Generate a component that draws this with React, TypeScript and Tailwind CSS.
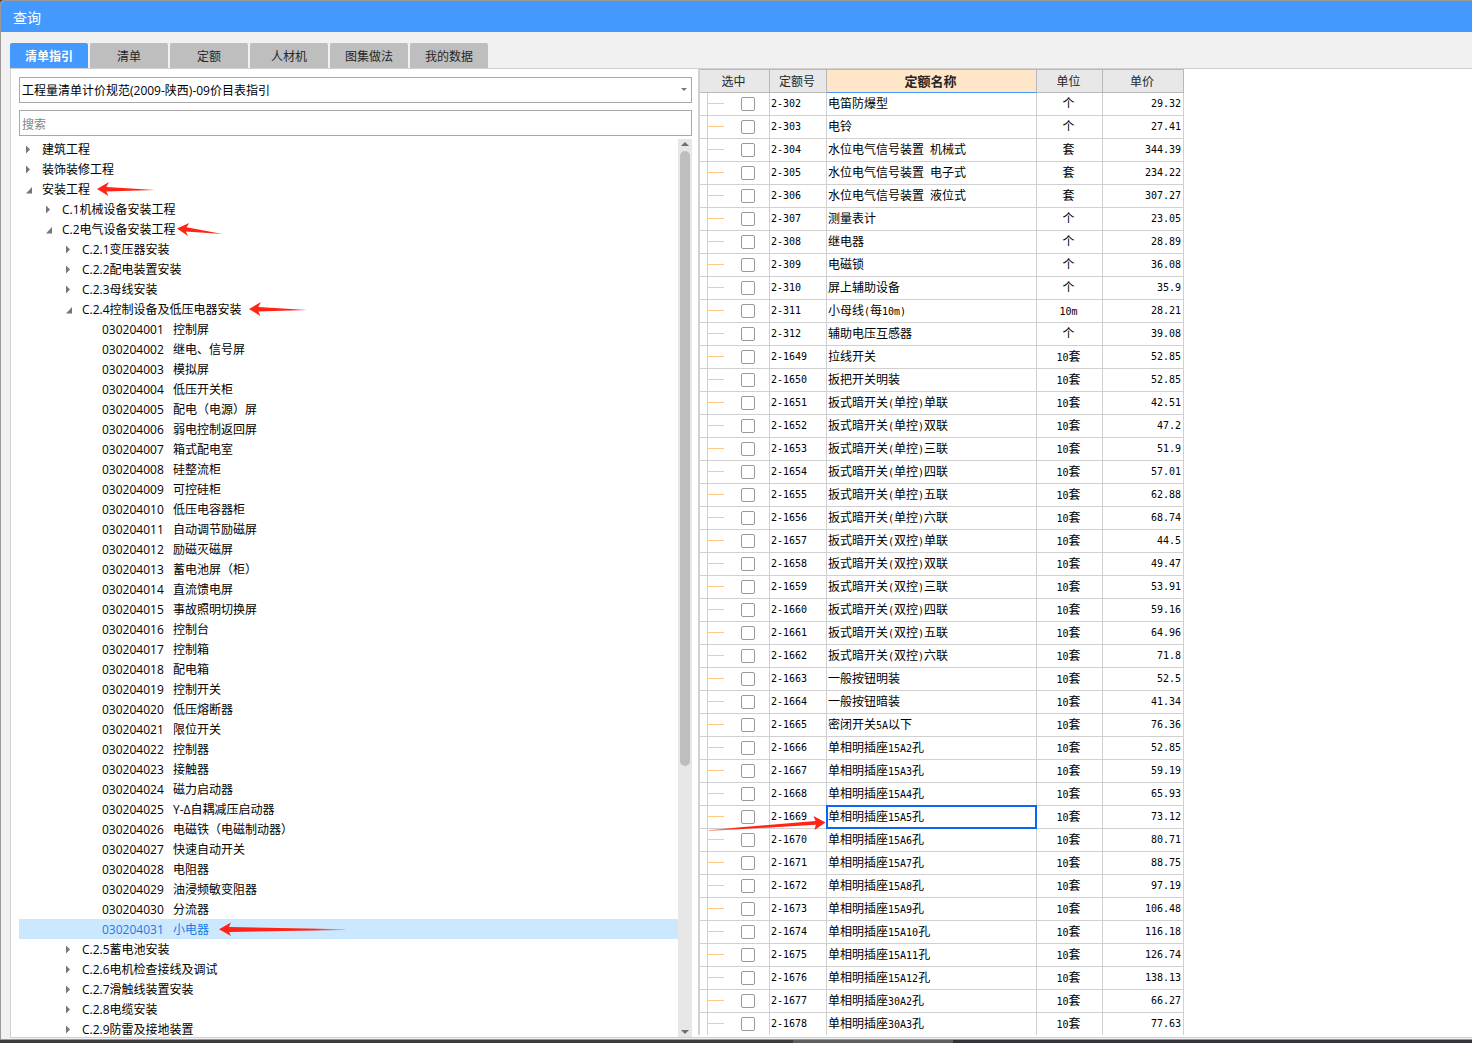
import { useState } from "react";
import clsx from "clsx";

type TreeItem = {
  level: number;
  label: string;
  code?: string;
  open?: boolean;
  mark?: "short" | "tilted" | "long";
};

type Quota = [code: string, name: string, unit: string, price: string];

const TABS = ["清单指引", "清单", "定额", "人材机", "图集做法", "我的数据"];

const LEAVES = [
  "控制屏", "继电、信号屏", "模拟屏", "低压开关柜", "配电（电源）屏", "弱电控制返回屏", "箱式配电室", "硅整流柜",
  "可控硅柜", "低压电容器柜", "自动调节励磁屏", "励磁灭磁屏", "蓄电池屏（柜）", "直流馈电屏", "事故照明切换屏", "控制台",
  "控制箱", "配电箱", "控制开关", "低压熔断器", "限位开关", "控制器", "接触器", "磁力启动器",
  "Y-Δ自耦减压启动器", "电磁铁（电磁制动器）", "快速自动开关", "电阻器", "油浸频敏变阻器", "分流器", "小电器",
];

const TREE: TreeItem[] = [
  { level: 0, label: "建筑工程" },
  { level: 0, label: "装饰装修工程" },
  { level: 0, label: "安装工程", open: true, mark: "short" },
  { level: 1, label: "C.1机械设备安装工程" },
  { level: 1, label: "C.2电气设备安装工程", open: true, mark: "tilted" },
  { level: 2, label: "C.2.1变压器安装" },
  { level: 2, label: "C.2.2配电装置安装" },
  { level: 2, label: "C.2.3母线安装" },
  { level: 2, label: "C.2.4控制设备及低压电器安装", open: true, mark: "short" },
  ...LEAVES.map((label, i): TreeItem => ({
    level: 3,
    label,
    code: String(30204001 + i).padStart(9, "0"),
    mark: label === "小电器" ? "long" : undefined,
  })),
  { level: 2, label: "C.2.5蓄电池安装" },
  { level: 2, label: "C.2.6电机检查接线及调试" },
  { level: 2, label: "C.2.7滑触线装置安装" },
  { level: 2, label: "C.2.8电缆安装" },
  { level: 2, label: "C.2.9防雷及接地装置" },
];

const QUOTAS: Quota[] = [
  ["2-302", "电笛防爆型", "个", "29.32"],
  ["2-303", "电铃", "个", "27.41"],
  ["2-304", "水位电气信号装置 机械式", "套", "344.39"],
  ["2-305", "水位电气信号装置 电子式", "套", "234.22"],
  ["2-306", "水位电气信号装置 液位式", "套", "307.27"],
  ["2-307", "测量表计", "个", "23.05"],
  ["2-308", "继电器", "个", "28.89"],
  ["2-309", "电磁锁", "个", "36.08"],
  ["2-310", "屏上辅助设备", "个", "35.9"],
  ["2-311", "小母线(每10m)", "10m", "28.21"],
  ["2-312", "辅助电压互感器", "个", "39.08"],
  ["2-1649", "拉线开关", "10套", "52.85"],
  ["2-1650", "扳把开关明装", "10套", "52.85"],
  ["2-1651", "扳式暗开关(单控)单联", "10套", "42.51"],
  ["2-1652", "扳式暗开关(单控)双联", "10套", "47.2"],
  ["2-1653", "扳式暗开关(单控)三联", "10套", "51.9"],
  ["2-1654", "扳式暗开关(单控)四联", "10套", "57.01"],
  ["2-1655", "扳式暗开关(单控)五联", "10套", "62.88"],
  ["2-1656", "扳式暗开关(单控)六联", "10套", "68.74"],
  ["2-1657", "扳式暗开关(双控)单联", "10套", "44.5"],
  ["2-1658", "扳式暗开关(双控)双联", "10套", "49.47"],
  ["2-1659", "扳式暗开关(双控)三联", "10套", "53.91"],
  ["2-1660", "扳式暗开关(双控)四联", "10套", "59.16"],
  ["2-1661", "扳式暗开关(双控)五联", "10套", "64.96"],
  ["2-1662", "扳式暗开关(双控)六联", "10套", "71.8"],
  ["2-1663", "一般按钮明装", "10套", "52.5"],
  ["2-1664", "一般按钮暗装", "10套", "41.34"],
  ["2-1665", "密闭开关5A以下", "10套", "76.36"],
  ["2-1666", "单相明插座15A2孔", "10套", "52.85"],
  ["2-1667", "单相明插座15A3孔", "10套", "59.19"],
  ["2-1668", "单相明插座15A4孔", "10套", "65.93"],
  ["2-1669", "单相明插座15A5孔", "10套", "73.12"],
  ["2-1670", "单相明插座15A6孔", "10套", "80.71"],
  ["2-1671", "单相明插座15A7孔", "10套", "88.75"],
  ["2-1672", "单相明插座15A8孔", "10套", "97.19"],
  ["2-1673", "单相明插座15A9孔", "10套", "106.48"],
  ["2-1674", "单相明插座15A10孔", "10套", "116.18"],
  ["2-1675", "单相明插座15A11孔", "10套", "126.74"],
  ["2-1676", "单相明插座15A12孔", "10套", "138.13"],
  ["2-1677", "单相明插座30A2孔", "10套", "66.27"],
  ["2-1678", "单相明插座30A3孔", "10套", "77.63"],
];

const INDENT = ["pl-[7px]", "pl-[27px]", "pl-[47px]", "pl-[67px]"];

function Toggle({ open }: { open?: boolean }) {
  return (
    <svg className="size-4 shrink-0 fill-[#777777]" viewBox="0 0 16 16" aria-hidden="true">
      {open ? <path d="M6 6V12.5H0z" /> : <path d="M0 4.5l4 4-4 4z" />}
    </svg>
  );
}

function RedArrow({ kind }: { kind: "short" | "tilted" | "long" }) {
  if (kind === "tilted") {
    return (
      <svg className="ml-px h-3.5 w-[46px] shrink-0 fill-[#ff2416]" viewBox="0 0 46 14" aria-hidden="true">
        <path d="M0 6.4L12.2 1 9.5 5.3 45.5 12 8.8 9.4 11 14z" />
      </svg>
    );
  }
  if (kind === "long") {
    return (
      <svg className="ml-2.5 h-3.5 w-[126px] shrink-0" viewBox="0 0 126 14" aria-hidden="true">
        <defs>
          <linearGradient id="fade">
            <stop offset="0.75" stopColor="#ff2416" />
            <stop offset="1" stopColor="#ff2416" stopOpacity="0.3" />
          </linearGradient>
        </defs>
        <path fill="url(#fade)" d="M0 7.2L12 .4 10 5 126 7.2V8L10 10 12 14z" />
      </svg>
    );
  }
  return (
    <svg className="ml-[7px] h-3.5 w-[58px] shrink-0 fill-[#ff2416]" viewBox="0 0 58 14" aria-hidden="true">
      <path d="M0 7L12 0 9.3 4.9 58 8 9.3 9.6 11.5 14z" />
    </svg>
  );
}

// Half-width runs use a smaller monospace size so two of them fill one CJK cell
function Mixed({ text }: { text: string }) {
  return (
    <>
      {text.split(/([\x20-\x7e]+)/).map((part, i) =>
        i % 2 ? (
          <span key={i} className="text-[10px] whitespace-pre">{part}</span>
        ) : (
          part
        )
      )}
    </>
  );
}

export default function App() {
  const [tab, setTab] = useState("清单指引");
  const [picked, setPicked] = useState("小电器");
  const [cell, setCell] = useState("2-1669");

  return (
    <div className="flex h-screen flex-col overflow-hidden bg-[#3c3c40] font-['Open_Sans','Noto_Sans_CJK_SC',sans-serif] text-xs text-black">
      <div className="flex min-h-0 flex-1 flex-col rounded-tl border-t border-b border-l border-[#9a9a9a] bg-[#f1f1f1]">
        <header className="flex h-[31px] shrink-0 items-center rounded-tl-[3px] bg-[#4499ff] pt-0.5 pl-3">
          <h1 className="text-sm text-white">查询</h1>
        </header>

        <nav className="flex shrink-0 gap-0.5 pt-[11px] pl-[9px]">
          {TABS.map((name) => (
            <button
              key={name}
              onClick={() => setTab(name)}
              className={clsx(
                "h-[25px] w-[78px] rounded-t-xs pt-0.5",
                name === tab ? "bg-[#4499ff] font-bold text-white" : "bg-[#bebebe] text-[#262626]"
              )}
            >
              {name}
            </button>
          ))}
        </nav>

        <main className="mb-px ml-[9px] flex min-h-0 flex-1 border border-r-0 border-[#d0d0d0] bg-white">
          {/* Left: guide tree */}
          <section className="flex w-[687px] shrink-0 flex-col pt-2 pl-2">
            <div className="relative mr-1.5 shrink-0">
              <select
                aria-label="计价规范"
                className="block h-[26px] w-full appearance-none border border-[#a8a8a8] bg-white pt-0.5 pl-0.5"
              >
                <option>工程量清单计价规范(2009-陕西)-09价目表指引</option>
              </select>
              <svg className="pointer-events-none absolute top-[11px] right-[5px] h-[3px] w-[6px] fill-[#777777]" viewBox="0 0 6 3">
                <path d="M0 0h6L3 3z" />
              </svg>
            </div>
            <input
              type="text"
              aria-label="搜索"
              placeholder="搜索"
              className="mt-[7px] mr-1.5 h-[26px] shrink-0 border border-[#a8a8a8] pt-0.5 pl-0.5 outline-none placeholder:text-[#858585]"
            />

            <div className="mt-[3px] mr-1.5 flex min-h-0 flex-1">
              <ul className="min-w-0 flex-1 overflow-hidden">
                {TREE.map((item) => (
                  <li key={item.label}>
                    <button
                      onClick={() => setPicked(item.label)}
                      className={clsx(
                        "flex h-5 w-full items-center text-left whitespace-nowrap",
                        INDENT[item.level],
                        item.label === picked && "bg-[#cce8ff] text-[#1a7ae8]"
                      )}
                    >
                      {item.code ? <span className="w-4 shrink-0" /> : <Toggle open={item.open} />}
                      {item.code && <span className="w-[71px] shrink-0 pt-0.5">{item.code}</span>}
                      <span className="pt-0.5">{item.label}</span>
                      {item.mark && <RedArrow kind={item.mark} />}
                    </button>
                  </li>
                ))}
              </ul>
              <div className="flex w-3.5 shrink-0 flex-col items-center bg-[#e7e7e7] py-[3px]">
                <svg className="h-[4px] w-2 shrink-0 fill-[#6f6f78]" viewBox="0 0 8 4">
                  <path d="M4 0l4 4H0z" />
                </svg>
                <div className="mt-[5px] flex w-2.5 flex-1 flex-col">
                  <div className="h-[70%] rounded-full bg-[#bebebe]" />
                </div>
                <svg className="h-[4px] w-2 shrink-0 fill-[#6f6f78]" viewBox="0 0 8 4">
                  <path d="M0 0h8L4 4z" />
                </svg>
              </div>
            </div>
          </section>

          {/* Right: quota list */}
          <section className="mb-0.5 min-w-0 flex-1 overflow-hidden border-l-2 border-[#d0d0d0]">
            <table className="w-[484px] table-fixed border-separate border-spacing-0 font-['DejaVu_Sans_Mono','Noto_Sans_CJK_SC',monospace]">
              <colgroup>
                <col className="w-[70px]" />
                <col className="w-[57px]" />
                <col className="w-[210px]" />
                <col className="w-[66px]" />
                <col className="w-[81px]" />
              </colgroup>
              <thead>
                <tr className="h-6 bg-[#e8e8e8] text-[#262626] *:border-t *:border-r *:border-b *:border-[#b8b8b8] *:pt-0.5 *:pr-0.5 *:pb-0 *:pl-0 *:leading-5">
                  <th className="font-normal">选中</th>
                  <th className="font-normal">定额号</th>
                  <th className="border-b-[#4499ff]! bg-[#ffe6c8] text-[13px] font-bold">定额名称</th>
                  <th className="font-normal">单位</th>
                  <th className="font-normal">单价</th>
                </tr>
              </thead>
              <tbody>
                {QUOTAS.map(([code, name, unit, price]) => (
                  <tr key={code} className="h-[23px] *:border-r *:border-b *:border-[#d0d0d0] *:p-0 *:leading-5">
                    <td>
                      <div className="-mb-px flex h-[23px] pl-[7px]">
                        <div className="flex flex-1 border-l border-[#ffc880]">
                          <span className="mt-[10px] h-px w-4 bg-[#ffc880]" />
                          <input
                            type="checkbox"
                            aria-label={code}
                            className="mt-1 ml-[17px] size-3.5 appearance-none rounded-xs border border-[#999999] bg-white checked:bg-[#4499ff]"
                          />
                        </div>
                      </div>
                    </td>
                    <td className="relative pl-px! text-[10px]">
                      {code}
                      {code === "2-1669" && (
                        <svg
                          className="pointer-events-none absolute right-0 top-[9px] h-4 w-[117px] max-w-none"
                          viewBox="0 0 117 16"
                          aria-hidden="true"
                        >
                          <defs>
                            <linearGradient id="fadeIn">
                              <stop offset="0" stopColor="#ff2416" stopOpacity="0.4" />
                              <stop offset="0.25" stopColor="#ff2416" />
                            </linearGradient>
                          </defs>
                          <path fill="url(#fadeIn)" d="M0 15V16L106.8 9.8 105.5 15 116.5 7.4 104.5 1 106.5 6z" />
                        </svg>
                      )}
                    </td>
                    <td className="relative pl-px!" onClick={() => setCell(code)}>
                      <Mixed text={name} />
                      {code === cell && <div className="pointer-events-none absolute -inset-px border-2 border-[#0a66f5]" />}
                    </td>
                    <td className="pr-0.5! text-center">
                      <Mixed text={unit} />
                    </td>
                    <td className="pr-0.5! text-right text-[10px]">{price}</td>
                  </tr>
                ))}
              </tbody>
            </table>
          </section>
        </main>
      </div>
      <div className="flex h-[3px] shrink-0">
        <div className="flex-793" />
        <div className="flex-160 bg-[#625e60]" />
        <div className="flex-519 bg-[#36323a]" />
      </div>
    </div>
  );
}
